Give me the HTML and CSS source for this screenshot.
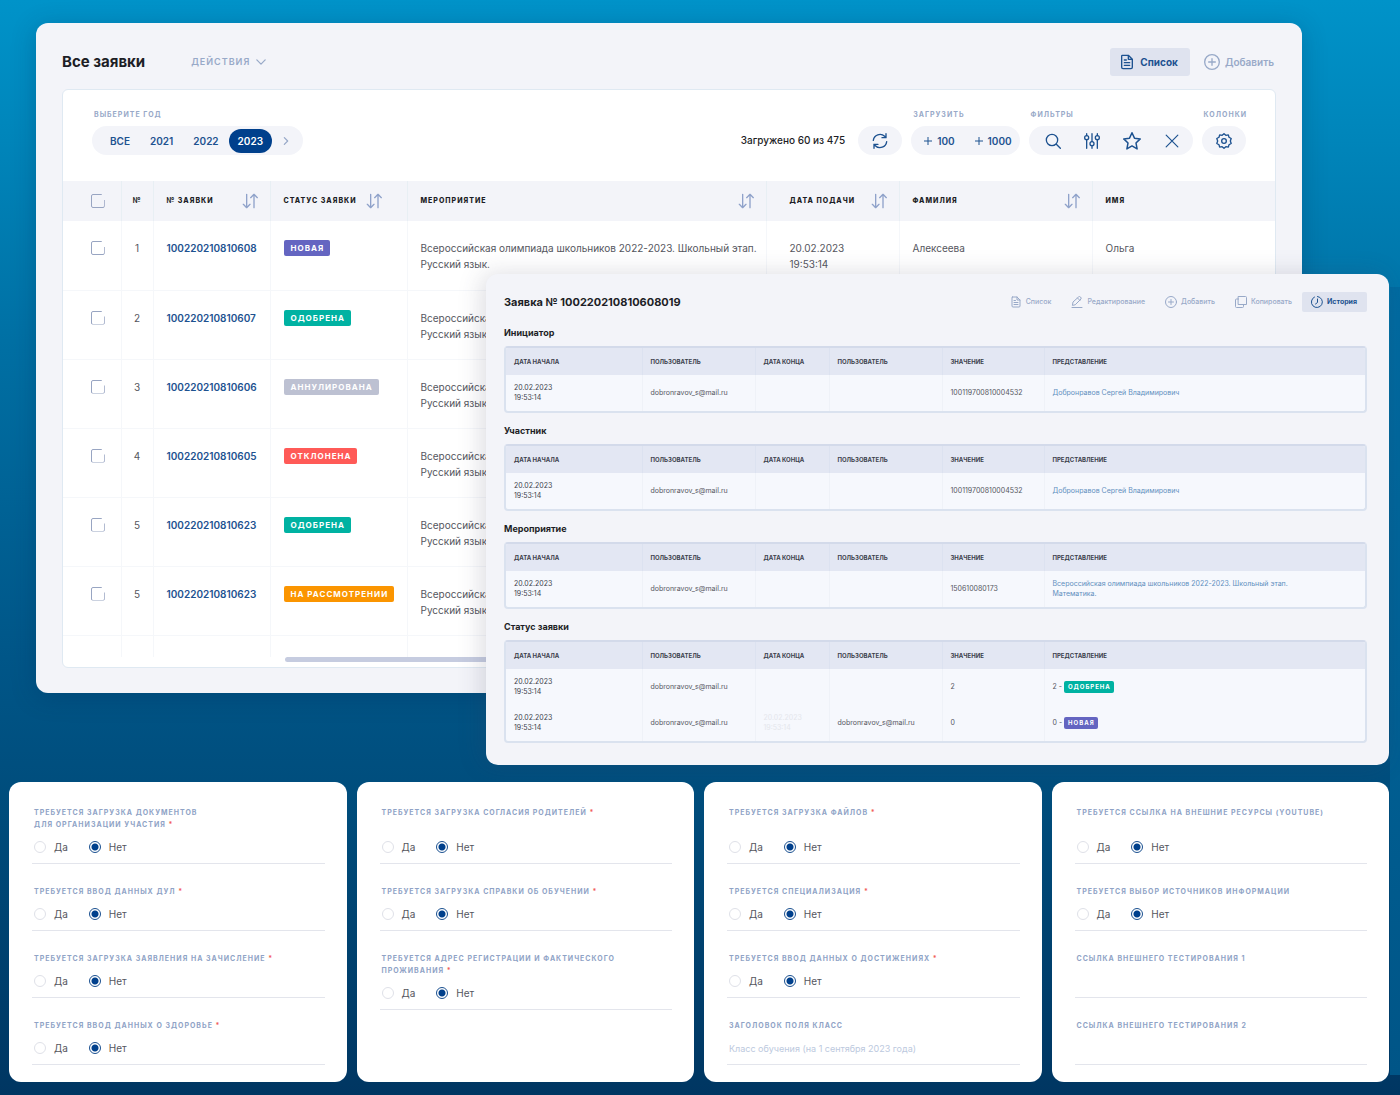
FILE: index.html
```html
<!DOCTYPE html>
<html lang="ru">
<head>
<meta charset="utf-8">
<meta name="viewport" content="width=device-width, initial-scale=1">
<title>Все заявки</title>
<link rel="stylesheet" href="styles.css">
</head>
<body>
<svg class="sprite" aria-hidden="true">
  <symbol id="i-doc" viewBox="0 0 24 24"><path d="M5 2h9l6 6v12a2 2 0 0 1-2 2H6a2 2 0 0 1-2-2V3a1 1 0 0 1 1-1zM14 2v6h6M8 9h3M8 13h8M8 17h8"/></symbol>
  <symbol id="i-plus" viewBox="0 0 24 24"><circle cx="12" cy="12" r="11"/><path d="M12 7v10M7 12h10"/></symbol>
  <symbol id="i-sort" viewBox="0 0 24 24"><path d="M7 2v19M2 17l5 5 5-5M18 22V3M13 7l5-5 5 5"/></symbol>
  <symbol id="i-down" viewBox="0 0 24 24"><path d="M2 7l10 10 10-10"/></symbol>
  <symbol id="i-right" viewBox="0 0 24 24"><path d="M8 4l8 8-8 8"/></symbol>
  <symbol id="i-refresh" viewBox="0 0 24 24"><path d="M2 11a10 10 0 0 1 17-6l2 2M21 1v6h-6M22 13a10 10 0 0 1-17 6l-2-2M3 23v-6h6"/></symbol>
  <symbol id="i-search" viewBox="0 0 24 24"><circle cx="10.500" cy="10.500" r="8.500"/><path d="M17 17l6 6"/></symbol>
  <symbol id="i-sliders" viewBox="0 0 24 24"><path d="M4 1v3M4 10v13M12 1v12M12 19v4M20 1v3M20 10v13"/><circle cx="4" cy="7" r="3"/><circle cx="12" cy="16" r="3"/><circle cx="20" cy="7" r="3"/></symbol>
  <symbol id="i-star" viewBox="0 0 24 24"><path d="M12 1l3.300 7.200 7.700 1-5.700 5.400 1.500 7.900L12 18.600l-6.800 3.900 1.500-7.900L1 9.200l7.700-1z"/></symbol>
  <symbol id="i-close" viewBox="0 0 24 24"><path d="M2 2l20 20M22 2L2 22"/></symbol>
  <symbol id="i-gear" viewBox="0 0 24 24"><path d="M12 1l2.800 2.500 3.700-.7 1 3.600 3.300 1.800-1.300 3.800 1.300 3.800-3.300 1.800-1 3.600-3.700-.7L12 23l-2.800-2.500-3.700.7-1-3.600-3.300-1.800L2.500 12 1.200 8.200l3.300-1.800 1-3.600 3.700.7z"/><circle cx="12" cy="12" r="3.500"/></symbol>
  <symbol id="i-edit" viewBox="0 0 24 24"><path d="M3 18l1-6L15 2q2-2 4 0t1 4L9 17zM13 4l5 5M2 23h20"/></symbol>
  <symbol id="i-copy" viewBox="0 0 24 24"><path d="M7 1h14a2 2 0 0 1 2 2v14H7zM7 6H3a2 2 0 0 0-2 2v13a2 2 0 0 0 2 2h12a2 2 0 0 0 2-2v-4"/></symbol>
  <symbol id="i-clock" viewBox="0 0 24 24"><path d="M7 2a11 11 0 1 0 6-1M13 6v7l-4 3"/></symbol>
</svg>

<div class="stage">
  <main class="panel list-panel">
    <header class="list-head">
      <h1>Все заявки</h1>
      <button class="actions" type="button">ДЕЙСТВИЯ <svg class="ic ic-10"><use href="#i-down"/></svg></button>
      <nav class="list-nav">
        <button class="nav-btn is-active" type="button"><svg class="ic ic-16"><use href="#i-doc"/></svg>Список</button>
        <button class="nav-btn" type="button"><svg class="ic ic-16"><use href="#i-plus"/></svg>Добавить</button>
      </nav>
    </header>

    <section class="sheet">
      <div class="toolbar">
        <div class="tool years">
          <span class="cap">ВЫБЕРИТЕ ГОД</span>
          <div class="pill">
            <button type="button" class="year">ВСЕ</button>
            <button type="button" class="year">2021</button>
            <button type="button" class="year">2022</button>
            <button type="button" class="year is-on">2023</button>
            <button type="button" class="next" aria-label="Далее"><svg class="ic ic-10"><use href="#i-right"/></svg></button>
          </div>
        </div>
        <p class="loaded">Загружено 60 из 475</p>
        <div class="tool">
          <div class="pill pill-one"><button type="button" aria-label="Обновить"><svg class="ic ic-16"><use href="#i-refresh"/></svg></button></div>
        </div>
        <div class="tool">
          <span class="cap">ЗАГРУЗИТЬ</span>
          <div class="pill pill-load"><button type="button"><svg class="ic ic-8"><path d="M4 0v8M0 4h8"/></svg>100</button><button type="button"><svg class="ic ic-8"><path d="M4 0v8M0 4h8"/></svg>1000</button></div>
        </div>
        <div class="tool">
          <span class="cap">ФИЛЬТРЫ</span>
          <div class="pill pill-filters">
            <button type="button" aria-label="Поиск"><svg class="ic ic-16"><use href="#i-search"/></svg></button>
            <button type="button" aria-label="Настройки"><svg class="ic ic-16"><use href="#i-sliders"/></svg></button>
            <button type="button" aria-label="Избранное"><svg class="ic ic-18"><use href="#i-star"/></svg></button>
            <button type="button" aria-label="Сбросить"><svg class="ic ic-14"><use href="#i-close"/></svg></button>
          </div>
        </div>
        <div class="tool">
          <span class="cap">КОЛОНКИ</span>
          <div class="pill pill-one"><button type="button" aria-label="Колонки"><svg class="ic ic-16"><use href="#i-gear"/></svg></button></div>
        </div>
      </div>

      <table class="requests">
        <colgroup><col class="w-check"><col class="w-no"><col class="w-id"><col class="w-status"><col><col class="w-date"><col class="w-last"><col class="w-first"></colgroup>
        <thead>
          <tr>
            <th class="c-check"><input type="checkbox" class="check" aria-label="Выбрать все"></th>
            <th class="c-no">№</th>
            <th><div class="th">№ ЗАЯВКИ<svg class="ic ic-16"><use href="#i-sort"/></svg></div></th>
            <th><div class="th th-near">СТАТУС ЗАЯВКИ<svg class="ic ic-16"><use href="#i-sort"/></svg></div></th>
            <th><div class="th">МЕРОПРИЯТИЕ<svg class="ic ic-16"><use href="#i-sort"/></svg></div></th>
            <th class="c-date"><div class="th">ДАТА ПОДАЧИ<svg class="ic ic-16"><use href="#i-sort"/></svg></div></th>
            <th><div class="th">ФАМИЛИЯ<svg class="ic ic-16"><use href="#i-sort"/></svg></div></th>
            <th>ИМЯ</th>
          </tr>
        </thead>
        <tbody>
          <tr><td class="c-check"><input type="checkbox" class="check" aria-label="Выбрать 1"></td><td class="c-no">1</td><td><a href="#r1">100220210810608</a></td><td><span class="badge new">НОВАЯ</span></td><td>Всероссийская олимпиада школьников 2022-2023. Школьный этап.<br>Русский язык.</td><td class="c-date">20.02.2023<br>19:53:14</td><td>Алексеева</td><td>Ольга</td></tr>
          <tr><td class="c-check"><input type="checkbox" class="check" aria-label="Выбрать 2"></td><td class="c-no">2</td><td><a href="#r2">100220210810607</a></td><td><span class="badge ok">ОДОБРЕНА</span></td><td>Всероссийская<br>Русский язык</td><td></td><td></td><td></td></tr>
          <tr><td class="c-check"><input type="checkbox" class="check" aria-label="Выбрать 3"></td><td class="c-no">3</td><td><a href="#r3">100220210810606</a></td><td><span class="badge void">АННУЛИРОВАНА</span></td><td>Всероссийская<br>Русский язык</td><td></td><td></td><td></td></tr>
          <tr><td class="c-check"><input type="checkbox" class="check" aria-label="Выбрать 4"></td><td class="c-no">4</td><td><a href="#r4">100220210810605</a></td><td><span class="badge no">ОТКЛОНЕНА</span></td><td>Всероссийская<br>Русский язык</td><td></td><td></td><td></td></tr>
          <tr><td class="c-check"><input type="checkbox" class="check" aria-label="Выбрать 5"></td><td class="c-no">5</td><td><a href="#r5">100220210810623</a></td><td><span class="badge ok">ОДОБРЕНА</span></td><td>Всероссийская<br>Русский язык</td><td></td><td></td><td></td></tr>
          <tr><td class="c-check"><input type="checkbox" class="check" aria-label="Выбрать 6"></td><td class="c-no">5</td><td><a href="#r6">100220210810623</a></td><td><span class="badge wait">НА РАССМОТРЕНИИ</span></td><td>Всероссийская<br>Русский язык</td><td></td><td></td><td></td></tr>
          <tr class="tail"><td></td><td></td><td></td><td></td><td></td><td></td><td></td><td></td></tr>
        </tbody>
      </table>
      <div class="scroll"><div class="thumb"></div></div>
    </section>
  </main>

  <section class="panel detail-panel">
    <header class="detail-head">
      <h2>Заявка № 100220210810608019</h2>
      <nav class="detail-nav">
        <button type="button"><svg class="ic ic-12"><use href="#i-doc"/></svg>Список</button>
        <button type="button"><svg class="ic ic-12"><use href="#i-edit"/></svg>Редактирование</button>
        <button type="button"><svg class="ic ic-12"><use href="#i-plus"/></svg>Добавить</button>
        <button type="button"><svg class="ic ic-12"><use href="#i-copy"/></svg>Копировать</button>
        <button type="button" class="is-active"><svg class="ic ic-12"><use href="#i-clock"/></svg>История</button>
      </nav>
    </header>

    <h3>Инициатор</h3>
    <div class="frame"><table class="history">
      <thead><tr><th class="h-start">ДАТА НАЧАЛА</th><th class="h-user">ПОЛЬЗОВАТЕЛЬ</th><th class="h-end">ДАТА КОНЦА</th><th class="h-user">ПОЛЬЗОВАТЕЛЬ</th><th class="h-val">ЗНАЧЕНИЕ</th><th>ПРЕДСТАВЛЕНИЕ</th></tr></thead>
      <tbody><tr><td class="when">20.02.2023<br>19:53:14</td><td>dobronravov_s@mail.ru</td><td></td><td></td><td>100119700810004532</td><td><a href="#p1">Добронравов Сергей Владимирович</a></td></tr></tbody>
    </table></div>

    <h3>Участник</h3>
    <div class="frame"><table class="history">
      <thead><tr><th class="h-start">ДАТА НАЧАЛА</th><th class="h-user">ПОЛЬЗОВАТЕЛЬ</th><th class="h-end">ДАТА КОНЦА</th><th class="h-user">ПОЛЬЗОВАТЕЛЬ</th><th class="h-val">ЗНАЧЕНИЕ</th><th>ПРЕДСТАВЛЕНИЕ</th></tr></thead>
      <tbody><tr><td class="when">20.02.2023<br>19:53:14</td><td>dobronravov_s@mail.ru</td><td></td><td></td><td>100119700810004532</td><td><a href="#p2">Добронравов Сергей Владимирович</a></td></tr></tbody>
    </table></div>

    <h3>Мероприятие</h3>
    <div class="frame"><table class="history">
      <thead><tr><th class="h-start">ДАТА НАЧАЛА</th><th class="h-user">ПОЛЬЗОВАТЕЛЬ</th><th class="h-end">ДАТА КОНЦА</th><th class="h-user">ПОЛЬЗОВАТЕЛЬ</th><th class="h-val">ЗНАЧЕНИЕ</th><th>ПРЕДСТАВЛЕНИЕ</th></tr></thead>
      <tbody><tr><td class="when">20.02.2023<br>19:53:14</td><td>dobronravov_s@mail.ru</td><td></td><td></td><td>150610080173</td><td><a href="#p3">Всероссийская олимпиада школьников 2022-2023. Школьный этап.<br>Математика.</a></td></tr></tbody>
    </table></div>

    <h3>Статус заявки</h3>
    <div class="frame"><table class="history">
      <thead><tr><th class="h-start">ДАТА НАЧАЛА</th><th class="h-user">ПОЛЬЗОВАТЕЛЬ</th><th class="h-end">ДАТА КОНЦА</th><th class="h-user">ПОЛЬЗОВАТЕЛЬ</th><th class="h-val">ЗНАЧЕНИЕ</th><th>ПРЕДСТАВЛЕНИЕ</th></tr></thead>
      <tbody>
        <tr><td class="when">20.02.2023<br>19:53:14</td><td>dobronravov_s@mail.ru</td><td></td><td></td><td>2</td><td>2 - <span class="badge small ok">ОДОБРЕНА</span></td></tr>
        <tr><td class="when">20.02.2023<br>19:53:14</td><td>dobronravov_s@mail.ru</td><td class="ghost">20.02.2023<br>19:53:14</td><td>dobronravov_s@mail.ru</td><td>0</td><td>0 - <span class="badge small new">НОВАЯ</span></td></tr>
      </tbody>
    </table></div>
  </section>
</div>

<form class="cards">
  <section class="card">
    <fieldset class="field first"><legend>ТРЕБУЕТСЯ ЗАГРУЗКА ДОКУМЕНТОВ<br>ДЛЯ ОРГАНИЗАЦИИ УЧАСТИЯ <i>*</i></legend><div class="opts"><label><input type="radio" name="a1">Да</label><label><input type="radio" name="a1" checked>Нет</label></div></fieldset>
    <fieldset class="field"><legend>ТРЕБУЕТСЯ ВВОД ДАННЫХ ДУЛ <i>*</i></legend><div class="opts"><label><input type="radio" name="a2">Да</label><label><input type="radio" name="a2" checked>Нет</label></div></fieldset>
    <fieldset class="field"><legend>ТРЕБУЕТСЯ ЗАГРУЗКА ЗАЯВЛЕНИЯ НА ЗАЧИСЛЕНИЕ <i>*</i></legend><div class="opts"><label><input type="radio" name="a3">Да</label><label><input type="radio" name="a3" checked>Нет</label></div></fieldset>
    <fieldset class="field"><legend>ТРЕБУЕТСЯ ВВОД ДАННЫХ О ЗДОРОВЬЕ <i>*</i></legend><div class="opts"><label><input type="radio" name="a4">Да</label><label><input type="radio" name="a4" checked>Нет</label></div></fieldset>
  </section>
  <section class="card">
    <fieldset class="field first"><legend>ТРЕБУЕТСЯ ЗАГРУЗКА СОГЛАСИЯ РОДИТЕЛЕЙ <i>*</i></legend><div class="opts"><label><input type="radio" name="b1">Да</label><label><input type="radio" name="b1" checked>Нет</label></div></fieldset>
    <fieldset class="field"><legend>ТРЕБУЕТСЯ ЗАГРУЗКА СПРАВКИ ОБ ОБУЧЕНИИ <i>*</i></legend><div class="opts"><label><input type="radio" name="b2">Да</label><label><input type="radio" name="b2" checked>Нет</label></div></fieldset>
    <fieldset class="field"><legend>ТРЕБУЕТСЯ АДРЕС РЕГИСТРАЦИИ И ФАКТИЧЕСКОГО<br>ПРОЖИВАНИЯ <i>*</i></legend><div class="opts"><label><input type="radio" name="b3">Да</label><label><input type="radio" name="b3" checked>Нет</label></div></fieldset>
  </section>
  <section class="card">
    <fieldset class="field first"><legend>ТРЕБУЕТСЯ ЗАГРУЗКА ФАЙЛОВ <i>*</i></legend><div class="opts"><label><input type="radio" name="c1">Да</label><label><input type="radio" name="c1" checked>Нет</label></div></fieldset>
    <fieldset class="field"><legend>ТРЕБУЕТСЯ СПЕЦИАЛИЗАЦИЯ <i>*</i></legend><div class="opts"><label><input type="radio" name="c2">Да</label><label><input type="radio" name="c2" checked>Нет</label></div></fieldset>
    <fieldset class="field"><legend>ТРЕБУЕТСЯ ВВОД ДАННЫХ О ДОСТИЖЕНИЯХ <i>*</i></legend><div class="opts"><label><input type="radio" name="c3">Да</label><label><input type="radio" name="c3" checked>Нет</label></div></fieldset>
    <div class="field"><label class="legend" for="c4">ЗАГОЛОВОК ПОЛЯ КЛАСС</label><input class="text" id="c4" type="text" placeholder="Класс обучения (на 1 сентября 2023 года)"></div>
  </section>
  <section class="card">
    <fieldset class="field first"><legend>ТРЕБУЕТСЯ ССЫЛКА НА ВНЕШНИЕ РЕСУРСЫ (YOUTUBE)</legend><div class="opts"><label><input type="radio" name="d1">Да</label><label><input type="radio" name="d1" checked>Нет</label></div></fieldset>
    <fieldset class="field"><legend>ТРЕБУЕТСЯ ВЫБОР ИСТОЧНИКОВ ИНФОРМАЦИИ</legend><div class="opts"><label><input type="radio" name="d2">Да</label><label><input type="radio" name="d2" checked>Нет</label></div></fieldset>
    <div class="field"><label class="legend" for="d3">ССЫЛКА ВНЕШНЕГО ТЕСТИРОВАНИЯ 1</label><input class="text" id="d3" type="text"></div>
    <div class="field"><label class="legend" for="d4">ССЫЛКА ВНЕШНЕГО ТЕСТИРОВАНИЯ 2</label><input class="text" id="d4" type="text"></div>
  </section>
</form>
</body>
</html>
```
FILE: styles.css
```css
:root {
  --ink: #1d1e26;
  --text: #55565e;
  --link: #1d5290;
  --muted: #98a9c8;
  --panel: #f3f4f9;
  --line: #f5f7fa;
}

* { box-sizing: border-box; }

body {
  margin: 0;
  min-height: 100vh;
  background:
    linear-gradient(#006ba1, #005587) right bottom 20px / 10px 72% no-repeat,
    linear-gradient(#0093c9 0%, #0086bb 12%, #006fa3 32%, #005688 60%, #004c7b 74%, #003662 100%);
  color: var(--text);
  font: 10px/16px Inter, "Noto Sans", sans-serif;
}

h1, h2, h3, p { margin: 0; color: var(--ink); }

button {
  border: 0;
  padding: 0;
  background: none;
  color: var(--link);
  font: inherit;
  font-weight: 600;
  display: inline-flex;
  align-items: center;
  white-space: nowrap;
}

a { color: var(--link); text-decoration: none; }

.sprite { display: none; }
.ic { flex: none; fill: none; stroke: currentColor; stroke-width: 2; stroke-linecap: round; stroke-linejoin: round; }
.ic-8 { width: 8px; height: 8px; stroke-width: 1; }
.ic-10 { width: 10px; height: 10px; stroke-width: 3; }
.ic-12 { width: 12px; height: 12px; }
.ic-14 { width: 14px; height: 14px; }
.ic-16 { width: 16px; height: 16px; }
.ic-18 { width: 18px; height: 18px; }

/* Overlapping windows */
.stage { display: grid; padding: 23px 11px 17px 36px; }
.panel { grid-area: 1 / 1; background: var(--panel); border-radius: 12px; min-width: 0; }

.list-panel { align-self: start; margin-right: 87px; padding: 23px 26px 25px; box-shadow: 0 4px 24px rgba(0, 40, 80, .25); }

.list-head { display: flex; align-items: center; height: 43px; padding-bottom: 12px; }
.list-head h1 { font-size: 15px; line-height: 20px; font-weight: 700; }
.actions { margin-left: 46px; gap: 6px; color: var(--muted); font-size: 9px; letter-spacing: 1px; }
.list-nav { display: flex; margin-left: auto; padding-right: 2px; gap: 14px; }
.nav-btn { height: 28px; gap: 5px; color: var(--muted); }
.nav-btn.is-active { padding: 0 12px 0 9px; background: #dfe3ef; border-radius: 3px; color: var(--link); font-weight: 700; }

.sheet { background: #fff; border: 1px solid #dfe9f2; border-radius: 6px; overflow: hidden; }

.toolbar { display: flex; align-items: flex-end; gap: 9px; padding: 19px 28px 26px 29px; }
.cap { display: block; padding-left: 2px; margin-bottom: 5px; color: var(--muted); font-size: 7px; line-height: 12px; font-weight: 700; letter-spacing: 1px; }
.pill { display: flex; align-items: center; height: 29px; border-radius: 15px; background: var(--panel); }
.years { margin-right: auto; }
.years .pill { padding: 0 12px 0 8px; }
.year { height: 24px; padding: 0 10px; border-radius: 12px; }
.year.is-on { padding: 0 9px; background: #00408c; color: #fff; }
.next { margin-left: 9px; color: var(--muted); }
.loaded { align-self: flex-end; line-height: 29px; font-weight: 500; margin-right: 4px; }
.pill-one { width: 44px; justify-content: center; }
.pill-load { padding: 0 8px 0 13px; gap: 20px; }
.pill-load button { gap: 5px; }
.pill-filters { width: 164px; justify-content: space-between; padding: 0 14px 0 16px; }

table { width: 100%; border-collapse: collapse; table-layout: fixed; text-align: left; }

.w-check { width: 58px; }
.w-no { width: 32px; }
.w-id { width: 117px; }
.w-status { width: 137px; }
.w-date { width: 133px; }
.w-last { width: 193px; }
.w-first { width: 183px; }

.requests th { height: 40px; padding: 0 12px 0 13px; background: var(--panel); border-left: 1px solid #e8eff4; color: var(--ink); font-size: 7px; font-weight: 800; letter-spacing: 1px; white-space: nowrap; }
.requests td { height: 69px; padding: 19px 0 0 13px; border-left: 1px solid var(--line); border-bottom: 1px solid var(--line); vertical-align: top; white-space: nowrap; }
.requests td:first-child, .requests th:first-child { border-left: 0; }
.requests .c-no, .requests .c-check { padding-left: 0; padding-right: 0; text-align: center; }
.requests .c-check { padding-left: 12px; }
.requests .c-date { padding-left: 23px; }
.requests .tail td { height: 22px; padding: 0; border-bottom: 0; }
.requests a { font-weight: 600; }
.th { display: flex; align-items: center; justify-content: space-between; }
.th-near { justify-content: flex-start; gap: 9px; }
.th .ic { color: #8fa2ca; }

.check {
  appearance: none;
  display: inline-block;
  width: 14px;
  height: 14px;
  margin: 1px 0;
  border: 1px solid #98a5c2;
  border-radius: 2px;
  vertical-align: top;
  clip-path: polygon(0 0, 11px 0, 11px 6px, 14px 6px, 14px 14px, 0 14px);
}

.badge { display: inline-block; padding: 0 6px 0 7px; border-radius: 2px; color: #fff; font-size: 8px; line-height: 16px; font-weight: 700; letter-spacing: 1px; vertical-align: top; }
.badge.small { padding: 0 3px 0 4px; font-size: 6px; line-height: 12px; vertical-align: middle; }
.badge.new { background: #6465c1; }
.badge.ok { background: #00b2a2; }
.badge.void { background: #bdc1d2; }
.badge.no { background: #ff5a57; }
.badge.wait { background: #fb9500; }

.scroll { padding: 0 140px 5px 222px; }
.thumb { height: 5px; border-radius: 3px; background: #c6cce0; }

/* Request history window */
.detail-panel { margin: 251px 0 0 450px; padding: 18px 22px 22px 18px; box-shadow: -4px 0 24px rgba(60, 60, 90, .18); }
.detail-head { display: flex; align-items: center; justify-content: space-between; height: 20px; margin-bottom: 11px; }
.detail-head h2 { font-size: 11px; line-height: 20px; font-weight: 700; }
.detail-nav { display: flex; gap: 20px; }
.detail-nav button { height: 20px; gap: 4px; color: var(--muted); font-size: 7px; font-weight: 500; }
.detail-nav .is-active { margin-left: -10px; padding: 0 10px 0 9px; background: #dfe3ef; border-radius: 2px; color: var(--link); font-weight: 700; }
.detail-panel h3 { margin-bottom: 3px; font-size: 9px; line-height: 20px; font-weight: 700; }
.frame { margin-bottom: 8px; border: 2px solid #dae2ef; border-top-color: #d3daea; border-radius: 4px; background: #f6f8fd; overflow: hidden; }
.frame:last-child { margin-bottom: 0; }
.history th { height: 27px; padding: 0 8px; background: #e3e7f3; border-left: 1px solid #dce2f0; color: #3c3f4c; font-size: 6px; line-height: 10px; font-weight: 700; }
.history td { height: 36px; padding: 0 8px; border-left: 1px solid #eff2f8; font-size: 7px; line-height: 10px; }
.history th:first-child, .history td:first-child { border-left: 0; }
.history .when { color: #3c3f4c; }
.history a { color: #5f8fbe; }
.history .ghost { color: #e4e6ec; }
.h-start { width: 136px; }
.h-user { width: 113px; }
.h-end { width: 74px; }
.h-val { width: 102px; }

/* Form cards */
.cards { display: grid; grid-template-columns: repeat(4, 1fr); gap: 10px; padding: 0 11px 13px 9px; }
.card { display: flex; flex-direction: column; gap: 22px; padding: 25px 22px 17px 23px; background: #fff; border-radius: 12px; min-width: 0; }
.field { display: flex; flex-direction: column; min-width: 0; margin: 0; padding: 0; border: 0; border-bottom: 1px solid #e3e5ec; }
.field legend, .legend { display: block; padding: 0 0 0 2px; color: #8fa3c6; font-size: 7px; line-height: 12px; font-weight: 700; letter-spacing: 1px; white-space: nowrap; }
.first legend { height: 24px; }
.field i { color: #f2605c; font-style: normal; }
.opts { display: flex; gap: 21px; height: 32px; padding-left: 2px; }
.opts label { display: flex; align-items: center; gap: 8px; }
.opts input {
  appearance: none;
  width: 12px;
  height: 12px;
  margin: 0;
  border: 1px solid #dfe1e8;
  border-radius: 50%;
}
.opts input:checked { border-color: #1a5090; background: radial-gradient(#00408c 0 3px, #fff 4px); }
.text { height: 32px; padding: 0 2px; border: 0; background: none; color: var(--text); font: inherit; font-size: 9px; min-width: 0; }
.text::placeholder { color: #bcc9de; opacity: 1; }
```
